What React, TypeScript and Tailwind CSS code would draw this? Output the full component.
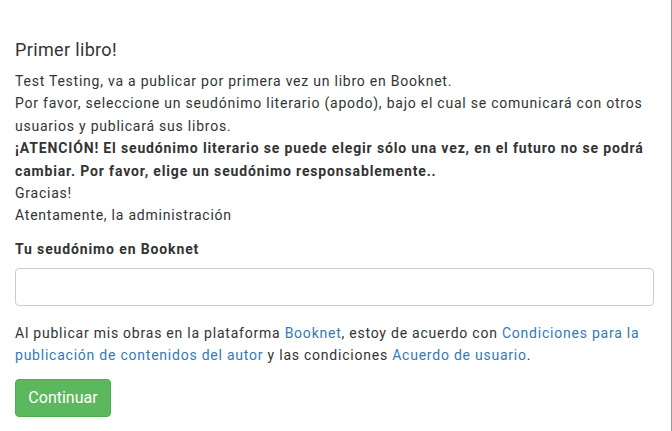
import React from "react";

export default function App() {
  return (
    <div
      className="w-[672px] h-[431px] bg-white border-r border-[#9a9a9a] text-[#333333] overflow-hidden"
      style={{ fontFamily: "Roboto, 'Helvetica Neue', Arial, sans-serif" }}
    >
      <div className="pl-[15px] pr-[18px] pt-[40px]">
        {/* Title */}
        <h4 className="text-[18px] leading-[20px] font-normal tracking-[0.35px] m-0 mb-[10px]">
          Primer libro!
        </h4>

        {/* Intro text */}
        <div className="text-[14px] leading-[22.4px] tracking-[0.77px]">
          <p>Test Testing, va a publicar por primera vez un libro en Booknet.</p>
          <p>
            Por favor, seleccione un seudónimo literario (apodo), bajo el cual se
            comunicará con otros usuarios y publicará sus libros.
          </p>
          <p className="font-bold tracking-[0.85px]">
            ¡ATENCIÓN! El seudónimo literario se puede elegir sólo una vez, en el
            futuro no se podrá cambiar. Por favor, elige un seudónimo
            responsablemente..
          </p>
          <p>Gracias!</p>
          <p>Atentamente, la administración</p>
        </div>

        {/* Pseudonym field */}
        <div className="mt-[11px]">
          <label className="block text-[14px] leading-[22.4px] font-bold tracking-[0.87px] mb-[7.6px]">
            Tu seudónimo en Booknet
          </label>
          <input
            type="text"
            className="block w-[639px] h-[38px] border border-[#cccccc] rounded-[4px] px-3 text-[14px] outline-none"
          />
        </div>

        {/* Terms */}
        <p className="mt-[16px] text-[14px] leading-[22.4px] tracking-[0.77px]">
          Al publicar mis obras en la plataforma{" "}
          <a className="text-[#337ab7]">Booknet</a>, estoy de acuerdo con{" "}
          <a className="text-[#337ab7]">
            Condiciones para la publicación de contenidos del autor
          </a>{" "}
          y las condiciones <a className="text-[#337ab7]">Acuerdo de usuario</a>.
        </p>

        <button className="mt-[12px] w-[96px] h-[38px] bg-[#5cb85c] border border-[#4cae4c] rounded-[4px] text-white text-[16px] leading-none">
          Continuar
        </button>
      </div>
    </div>
  );
}
